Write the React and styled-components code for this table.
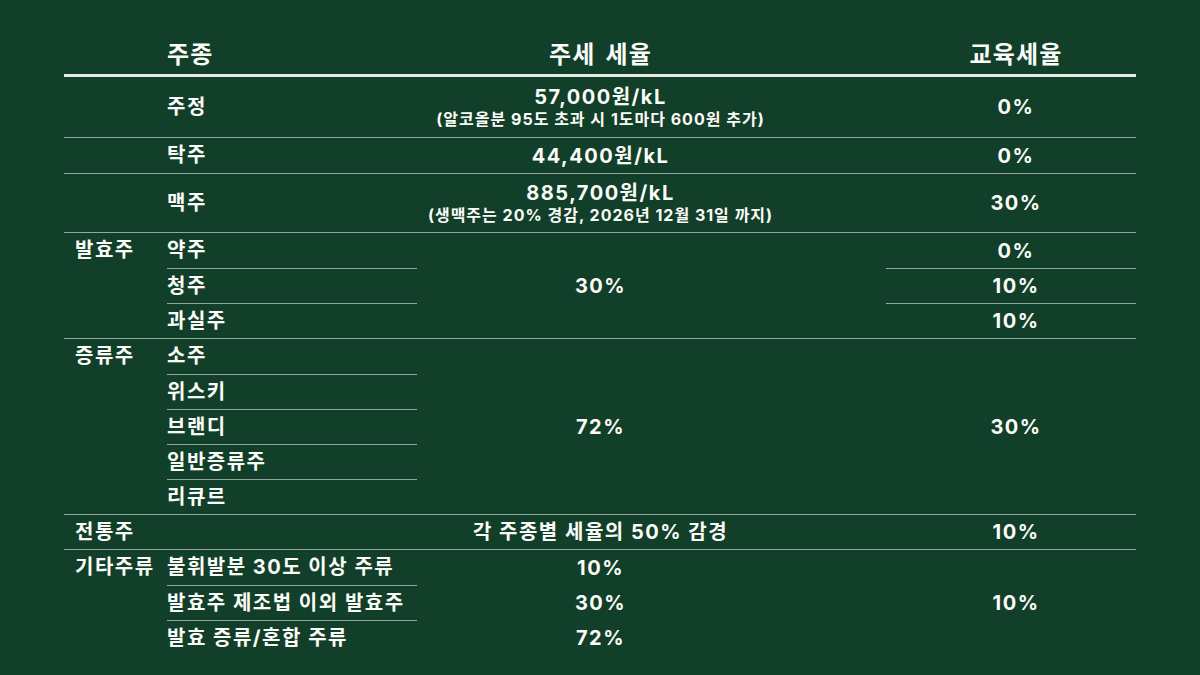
import React from 'react';
import styled, { createGlobalStyle } from 'styled-components';

const GlobalStyle = createGlobalStyle`
  html, body {
    margin: 0;
    background: #123f29;
  }
`;

const COLS = '103px 250px 469px 250px';
const LINE = 'rgba(255, 255, 255, 0.55)';

const groups = [
  {
    h: 60,
    rows: ['주정'],
    tax: [{ span: 1, main: '57,000원/kL', note: '(알코올분 95도 초과 시 1도마다 600원 추가)' }],
    edu: [{ span: 1, v: '0%' }],
  },
  {
    rows: ['탁주'],
    tax: [{ span: 1, main: '44,400원/kL' }],
    edu: [{ span: 1, v: '0%' }],
  },
  {
    h: 58,
    rows: ['맥주'],
    tax: [{ span: 1, main: '885,700원/kL', note: '(생맥주는 20% 경감, 2026년 12월 31일 까지)' }],
    edu: [{ span: 1, v: '30%' }],
  },
  {
    cat: '발효주',
    rows: ['약주', '청주', '과실주'],
    tax: [{ span: 3, main: '30%' }],
    edu: [
      { span: 1, v: '0%' },
      { span: 1, v: '10%' },
      { span: 1, v: '10%' },
    ],
  },
  {
    cat: '증류주',
    rows: ['소주', '위스키', '브랜디', '일반증류주', '리큐르'],
    tax: [{ span: 5, main: '72%' }],
    edu: [{ span: 5, v: '30%' }],
  },
  {
    h: 34,
    cat: '전통주',
    rows: [''],
    tax: [{ span: 1, main: '각 주종별 세율의 50% 감경' }],
    edu: [{ span: 1, v: '10%' }],
  },
  {
    cat: '기타주류',
    rows: ['불휘발분 30도 이상 주류', '발효주 제조법 이외 발효주', '발효 증류/혼합 주류'],
    tax: [
      { span: 1, main: '10%' },
      { span: 1, main: '30%' },
      { span: 1, main: '72%' },
    ],
    edu: [{ span: 3, v: '10%' }],
  },
];

function App() {
  return (
    <Page>
      <GlobalStyle />
      <Table>
        <HeadRow>
          <HeadCell />
          <HeadCell>주종</HeadCell>
          <HeadCell $center $shift>
            주세 세율
          </HeadCell>
          <HeadCell $center>교육세율</HeadCell>
        </HeadRow>

        {groups.map((g, gi) => {
          let taxRow = 1;
          let eduRow = 1;
          return (
            <Group key={gi} $h={g.h || 35}>
              {g.cat && <Cat>{g.cat}</Cat>}
              {g.rows.map((r, i) => (
                <Sub key={r + i} $row={i + 1} $divider={i > 0}>
                  {r}
                </Sub>
              ))}
              {g.tax.map((t, i) => {
                const row = taxRow;
                taxRow += t.span;
                return (
                  <Tax key={i} $row={row} $span={t.span}>
                    <span>{t.main}</span>
                    {t.note && <Note>{t.note}</Note>}
                  </Tax>
                );
              })}
              {g.edu.map((e, i) => {
                const row = eduRow;
                eduRow += e.span;
                return (
                  <Edu key={i} $row={row} $span={e.span} $divider={i > 0}>
                    {e.v}
                  </Edu>
                );
              })}
            </Group>
          );
        })}
      </Table>
    </Page>
  );
}

const Page = styled.div`
  width: 1200px;
  height: 675px;
  box-sizing: border-box;
  padding-top: 35px;
  background: #123f29;
  color: #fbfbf8;
  font-family: 'Inter', 'Noto Sans CJK KR', sans-serif;
  overflow: hidden;
`;

const Table = styled.div`
  width: 1072px;
  margin: 0 auto;
`;

const HeadRow = styled.div`
  display: grid;
  grid-template-columns: ${COLS};
  height: 26px;
  padding-bottom: 13px;
  align-items: center;
  border-bottom: 3px solid #e3ece5;
`;

const HeadCell = styled.div`
  font-size: 24px;
  font-weight: 700;
  letter-spacing: 1.2px;
  word-spacing: 3px;
  text-align: ${(p) => (p.$center ? 'center' : 'left')};
  padding-right: ${(p) => (p.$shift ? '102px' : '0')};
  padding-left: ${(p) => (p.$center && !p.$shift ? '10px' : '0')};
`;

const Group = styled.div`
  display: grid;
  grid-template-columns: ${COLS};
  grid-auto-rows: ${(p) => p.$h}px;
  font-size: 20px;
  font-weight: 700;
  letter-spacing: 1.5px;

  & + & {
    border-top: 1px solid ${LINE};
  }
`;

const Cat = styled.div`
  grid-column: 1;
  grid-row: 1;
  height: 35px;
  box-sizing: border-box;
  padding: 0 0 4px 11px;
  display: flex;
  align-items: center;
`;

const Sub = styled.div`
  grid-column: 2;
  grid-row: ${(p) => p.$row};
  display: flex;
  align-items: center;
  box-sizing: border-box;
  padding-bottom: 4px;
  border-top: ${(p) => (p.$divider ? `1px solid ${LINE}` : 'none')};
`;

const Tax = styled.div`
  grid-column: 3;
  grid-row: ${(p) => p.$row} / span ${(p) => p.$span};
  display: flex;
  flex-direction: column;
  align-items: center;
  justify-content: center;
  padding-right: 102px;
  line-height: 24px;
`;

const Note = styled.span`
  font-size: 16px;
  line-height: 20px;
  letter-spacing: 1px;
`;

const Edu = styled.div`
  grid-column: 4;
  grid-row: ${(p) => p.$row} / span ${(p) => p.$span};
  display: flex;
  align-items: center;
  justify-content: center;
  padding-left: 10px;
  box-sizing: border-box;
  border-top: ${(p) => (p.$divider ? `1px solid ${LINE}` : 'none')};
`;

export default App;
